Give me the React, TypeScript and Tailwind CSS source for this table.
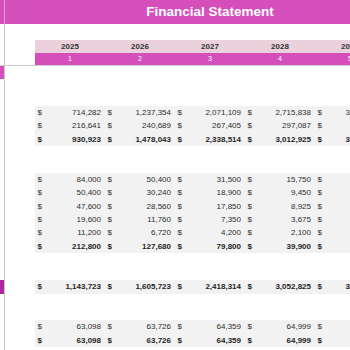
const YEARS = ["2025", "2026", "2027", "2028", "2029"];

type Row =
  | { kind: "blank"; marker?: string }
  | { kind: "data"; values: string[]; bold?: boolean; marker?: string };

const ROWS: Row[] = [
  { kind: "blank", marker: "bg-[#d44fba]" },
  { kind: "blank" },
  { kind: "blank" },
  { kind: "data", values: ["714,282", "1,237,354", "2,071,109", "2,715,838", "3,394,798"] },
  { kind: "data", values: ["216,641", "240,689", "267,405", "297,087", "330,767"] },
  { kind: "data", values: ["930,923", "1,478,043", "2,338,514", "3,012,925", "3,725,565"], bold: true },
  { kind: "blank" },
  { kind: "blank" },
  { kind: "data", values: ["84,000", "50,400", "31,500", "15,750", "7,875"] },
  { kind: "data", values: ["50,400", "30,240", "18,900", "9,450", "4,725"] },
  { kind: "data", values: ["47,600", "28,560", "17,850", "8,925", "4,463"] },
  { kind: "data", values: ["19,600", "11,760", "7,350", "3,675", "1,838"] },
  { kind: "data", values: ["11,200", "6,720", "4,200", "2,100", "1,050"] },
  { kind: "data", values: ["212,800", "127,680", "79,800", "39,900", "19,950"], bold: true },
  { kind: "blank" },
  { kind: "blank" },
  { kind: "data", values: ["1,143,723", "1,605,723", "2,418,314", "3,052,825", "3,705,615"], bold: true, marker: "bg-[#b0289e]" },
  { kind: "blank" },
  { kind: "blank" },
  { kind: "data", values: ["63,098", "63,726", "64,359", "64,999", "65,649"] },
  { kind: "data", values: ["63,098", "63,726", "64,359", "64,999", "65,649"], bold: true },
  { kind: "blank" },
];

function LeftEdge({ marker, line = "bg-[#c9c9c9]" }: { marker?: string; line?: string }) {
  return (
    <>
      <div className={`w-[4px] shrink-0 ${marker ?? ""}`} />
      <div className={`w-px shrink-0 ${line}`} />
      <div className="w-[30px] shrink-0" />
    </>
  );
}

function SheetRow({ row }: { row: Row }) {
  return (
    <div className="flex h-[13.4px] w-[390px] shrink-0">
      <LeftEdge marker={row.marker} />
      {row.kind === "data" &&
        row.values.map((v, i) => (
          <div
            key={i}
            className={`flex w-[70px] shrink-0 items-center justify-between bg-[#f2f2f2] pl-[2.5px] pr-[4px] text-[8px] leading-none ${
              row.bold ? "font-bold text-[#1f1f1f]" : "text-[#2e2e2e]"
            }`}
          >
            <span>$</span>
            <span>{v}</span>
          </div>
        ))}
    </div>
  );
}

export default function App() {
  return (
    <div className="relative h-[350px] w-[350px] overflow-hidden bg-white font-['Liberation_Sans',Arial,sans-serif]">
      <div className="flex w-[420px] flex-col">
        <div className="flex h-[24px] w-[420px]">
          <div className="w-[4px] shrink-0 bg-[#d44fba]" />
          <div className="w-px shrink-0 bg-[#dc9ccf]" />
          <div className="flex w-[410px] shrink-0 items-center justify-center bg-[#d44fba] text-[13.5px] font-bold text-white">
            Financial Statement
          </div>
        </div>

        <div className="flex h-[16px] w-[420px]">
          <LeftEdge />
        </div>

        <div className="flex h-[13px] w-[420px]">
          <LeftEdge />
          {YEARS.map((y) => (
            <div
              key={y}
              className="flex w-[70px] shrink-0 items-center justify-center bg-[#ead1dc] text-[8px] font-bold text-[#333333]"
            >
              {y}
            </div>
          ))}
        </div>

        <div className="flex h-[12px] w-[420px]">
          <LeftEdge />
          {YEARS.map((y, i) => (
            <div
              key={y}
              className="flex w-[70px] shrink-0 items-center justify-center bg-[#d44fba] text-[7px] text-white"
            >
              {i + 1}
            </div>
          ))}
        </div>

        <div className="h-px w-[420px] bg-[#cfcfcf]" />

        {ROWS.map((r, i) => (
          <SheetRow key={i} row={r} />
        ))}
      </div>
    </div>
  );
}
